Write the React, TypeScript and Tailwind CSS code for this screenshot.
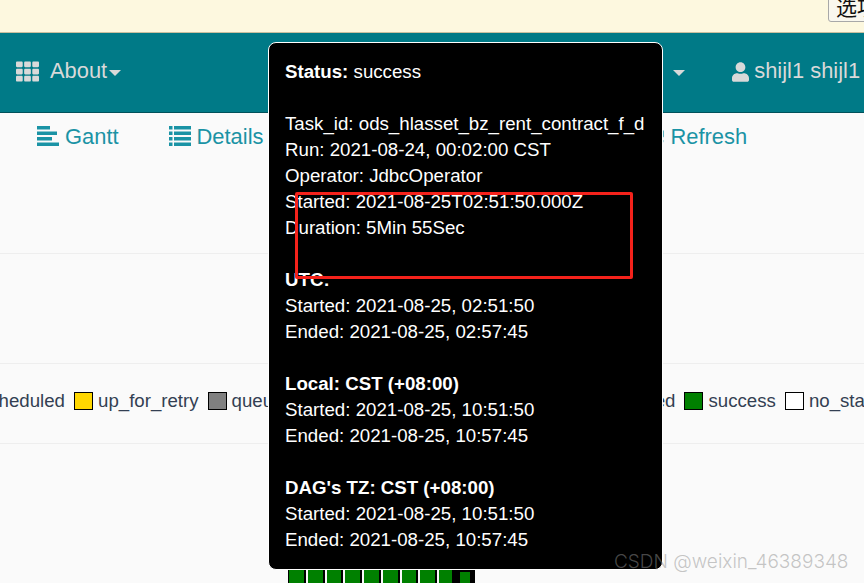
import { FaTh, FaUser, FaSyncAlt } from "react-icons/fa";

const font = { fontFamily: '"Liberation Sans", Arial, sans-serif' };

function Caret() {
  return <span className="block w-0 h-0 border-x-[6px] border-x-transparent border-t-[6px] border-t-[#d9d9d9]" />;
}

function GanttIcon() {
  return (
    <svg width="22" height="20" viewBox="0 0 22 20" fill="currentColor" className="shrink-0 mb-[3px]">
      <rect x="0" y="0" width="13" height="3.5" />
      <rect x="0" y="5.5" width="20" height="3.5" />
      <rect x="0" y="11" width="15" height="3.5" />
      <rect x="0" y="16.5" width="22" height="3.5" />
    </svg>
  );
}

function DetailsIcon() {
  const rows = [0, 5.5, 11, 16.5];
  return (
    <svg width="22" height="20" viewBox="0 0 22 20" fill="currentColor" className="shrink-0 mb-[3px]">
      {rows.map((y) => (
        <g key={y}>
          <rect x="0" y={y} width="3.5" height="3.5" />
          <rect x="5" y={y} width="17" height="3.5" />
        </g>
      ))}
    </svg>
  );
}

function Legend({ color, label, className }: { color: string; label: string; className?: string }) {
  return (
    <div className={"flex items-center shrink-0 " + (className ?? "")}>
      <span className="w-[19px] h-[18px] border border-black" style={{ background: color }} />
      <span className="ml-[5px] whitespace-nowrap">{label}</span>
    </div>
  );
}

function Line({ children }: { children?: React.ReactNode }) {
  return <div className="h-[26px] whitespace-nowrap">{children}</div>;
}

export default function App() {
  return (
    <div className="relative w-[864px] h-[583px] overflow-hidden bg-[#fafafa]" style={font}>
      {/* Browser notice */}
      <div className="flex justify-end h-[33px] bg-[#fdf8df] border-b border-[#c9c0a0] overflow-hidden">
        <div
          className="self-start shrink-0 w-[50px] h-[40px] -mt-[18px] -mr-[14px] border border-[#a8a8a8] rounded-[3px] bg-[#f9f7ee] text-[21px] leading-[21px] text-[#111] whitespace-nowrap pl-[7px] pt-[13px]"
          style={{ fontFamily: '"Noto Sans CJK SC", sans-serif' }}
        >
          选项
        </div>
      </div>

      {/* Navbar */}
      <div className="flex items-center h-[80px] bg-[#007a87] border-b border-[#00515a] text-[#d9d9d9] text-[21.9px] pl-[16px] pb-[2px]">
        <FaTh className="w-[23px] h-[23px] shrink-0" />
        <span className="ml-[11px]">About</span>
        <span className="ml-[2px] mt-[2px]"><Caret /></span>
        <span className="ml-[552px] mt-[2px]"><Caret /></span>
        <FaUser className="ml-[47px] w-[17px] h-[20px] shrink-0" />
        <span className="ml-[5px] whitespace-nowrap">shijl1 shijl1</span>
      </div>

      {/* Tabs */}
      <div className="flex items-center h-[47px] pl-[37px] pt-[1px] text-[21.9px] text-[#1a93a5]">
        <GanttIcon />
        <span className="ml-[6px]">Gantt</span>
        <span className="ml-[50px]"><DetailsIcon /></span>
        <span className="ml-[6px]">Details</span>
        <FaSyncAlt className="ml-[381px] w-[20px] h-[20px] mt-[4px] shrink-0" />
        <span className="ml-[6px]">Refresh</span>
      </div>

      <div className="h-[94px] border-b border-[#eeeeee]" />
      <div className="h-[110px] border-b border-[#eeeeee]" />

      {/* Legend */}
      <div className="flex items-center h-[80px] border-b border-[#eeeeee] text-[18.67px] text-[#333f52] -ml-[25px] pb-[6px]">
        <span className="whitespace-nowrap w-[90px] text-right shrink-0">scheduled</span>
        <Legend color="#ffd700" label="up_for_retry" className="ml-[9px]" />
        <Legend color="#808080" label="queued" className="ml-[9px]" />
        <Legend color="#ff0000" label="failed" className="ml-[313px]" />
        <Legend color="#008000" label="success" className="ml-[9px]" />
        <Legend color="#ffffff" label="no_status" className="ml-[9px]" />
      </div>

      {/* Task squares */}
      <div className="flex gap-[2px] pl-[288px] pt-[126px]">
        <span className="w-[1px] h-[14px] shrink-0 -mr-[2px] bg-black" />
        {Array.from({ length: 8 }).map((_, i) => (
          <span key={i} className="w-[16.75px] h-[14px] shrink-0 bg-[#008000] border-r-2 border-black" />
        ))}
        <span className="w-[13px] h-[14px] shrink-0 bg-[#008000]" />
        <span className="w-[23px] h-[14px] shrink-0 -ml-[2px] bg-black pl-[8px] pt-[2px]">
          <span className="block h-full w-[10px] bg-[#008000]" />
        </span>
      </div>

      {/* Tooltip */}
      <div className="absolute left-[268px] top-[42px] w-[395px] h-[528px] bg-black border border-white rounded-[8px] text-white text-[18.7px] leading-[26px] pl-[16px] pt-[16px]">
        <Line><b>Status:</b> success</Line>
        <Line />
        <Line>Task_id: ods_hlasset_bz_rent_contract_f_d</Line>
        <Line>Run: 2021-08-24, 00:02:00 CST</Line>
        <Line>Operator: JdbcOperator</Line>
        <Line>Started: 2021-08-25T02:51:50.000Z</Line>
        <Line>Duration: 5Min 55Sec</Line>
        <Line />
        <Line><b>UTC:</b></Line>
        <Line>Started: 2021-08-25, 02:51:50</Line>
        <Line>Ended: 2021-08-25, 02:57:45</Line>
        <Line />
        <Line><b>Local: CST (+08:00)</b></Line>
        <Line>Started: 2021-08-25, 10:51:50</Line>
        <Line>Ended: 2021-08-25, 10:57:45</Line>
        <Line />
        <Line><b>DAG's TZ: CST (+08:00)</b></Line>
        <Line>Started: 2021-08-25, 10:51:50</Line>
        <Line>Ended: 2021-08-25, 10:57:45</Line>
      </div>

      {/* Red annotation */}
      <div className="absolute left-[295px] top-[192px] w-[338px] h-[87px] border-[3px] border-[#f5221b] rounded-[2px]" />

      {/* Watermark */}
      <div className="absolute left-[614px] top-[550px] text-[19px] leading-[24px] text-[#8f8f8f]/50 whitespace-nowrap" style={{ fontFamily: '"Inter", "Liberation Sans", sans-serif', fontWeight: 300 }}>
        CSDN @weixin_46389348
      </div>
    </div>
  );
}
